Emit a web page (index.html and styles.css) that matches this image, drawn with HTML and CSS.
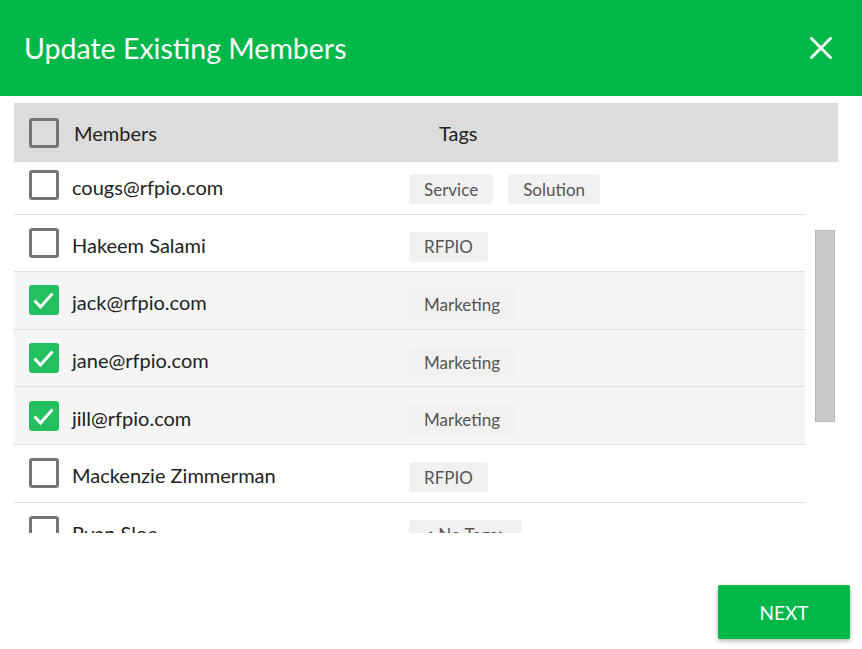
FILE: index.html
```html
<!DOCTYPE html>
<html>
<head>
    <title>Update Existing Members</title>
    <link rel="stylesheet" href="styles.css">
</head>
<body>
    <div class="dialog">
        <div class="dialog-header">
            <h1 class="dialog-title">Update Existing Members</h1>
            <button class="close-btn" aria-label="Close">
                <svg width="22" height="22" viewBox="0 0 22 22">
                    <path d="M1.5 1.5 L20.5 20.5 M20.5 1.5 L1.5 20.5" stroke="#fff" stroke-width="2.8" stroke-linecap="square"/>
                </svg>
            </button>
        </div>

        <div class="members-table">
            <div class="table-head">
                <span class="checkbox"></span>
                <span class="head-members">Members</span>
                <span class="head-tags">Tags</span>
            </div>

            <div class="table-body">
                <div class="rows">
                    <div class="row">
                        <span class="checkbox"></span>
                        <span class="member-name">cougs@rfpio.com</span>
                        <div class="tags">
                            <span class="tag">Service</span>
                            <span class="tag">Solution</span>
                        </div>
                    </div>
                    <div class="row">
                        <span class="checkbox"></span>
                        <span class="member-name">Hakeem Salami</span>
                        <div class="tags"><span class="tag">RFPIO</span></div>
                    </div>
                    <div class="row selected">
                        <span class="checkbox checked">
                            <svg width="30" height="30" viewBox="0 0 30 30"><polyline points="5.5,15.5 11.5,22 23.5,8.5" fill="none" stroke="#fff" stroke-width="3"/></svg>
                        </span>
                        <span class="member-name">jack@rfpio.com</span>
                        <div class="tags"><span class="tag">Marketing</span></div>
                    </div>
                    <div class="row selected">
                        <span class="checkbox checked">
                            <svg width="30" height="30" viewBox="0 0 30 30"><polyline points="5.5,15.5 11.5,22 23.5,8.5" fill="none" stroke="#fff" stroke-width="3"/></svg>
                        </span>
                        <span class="member-name">jane@rfpio.com</span>
                        <div class="tags"><span class="tag">Marketing</span></div>
                    </div>
                    <div class="row selected">
                        <span class="checkbox checked">
                            <svg width="30" height="30" viewBox="0 0 30 30"><polyline points="5.5,15.5 11.5,22 23.5,8.5" fill="none" stroke="#fff" stroke-width="3"/></svg>
                        </span>
                        <span class="member-name">jill@rfpio.com</span>
                        <div class="tags"><span class="tag">Marketing</span></div>
                    </div>
                    <div class="row">
                        <span class="checkbox"></span>
                        <span class="member-name">Mackenzie Zimmerman</span>
                        <div class="tags"><span class="tag">RFPIO</span></div>
                    </div>
                    <div class="row">
                        <span class="checkbox"></span>
                        <span class="member-name">Ryan Sloe</span>
                        <div class="tags"><span class="tag">&lt; No Tags&gt;</span></div>
                    </div>
                </div>
                <div class="scroll-track">
                    <div class="scroll-thumb"></div>
                </div>
            </div>
        </div>

        <div class="dialog-footer">
            <button class="next-btn">Next</button>
        </div>
    </div>
</body>
</html>
```

FILE: styles.css
```css
body {
    margin: 0;
    padding: 0;
    width: 862px;
    height: 649px;
    overflow: hidden;
    background: #fff;
    font-family: Lato, "Open Sans", Arial, sans-serif;
    color: #333;
}

.dialog {
    display: flex;
    flex-direction: column;
    height: 649px;
}

.dialog-header {
    height: 96px;
    flex-shrink: 0;
    display: flex;
    align-items: center;
    justify-content: space-between;
    padding: 0 30px 0 24px;
    background: #00b84a;
}

.dialog-title {
    margin: 0;
    color: #fff;
    font-size: 28.5px;
    font-weight: 400;
}

.close-btn {
    border: none;
    background: none;
    padding: 0;
    width: 22px;
    height: 22px;
    cursor: pointer;
    display: flex;
}

.members-table {
    margin: 7px 24px 0 14px;
}

.table-head {
    height: 59px;
    display: flex;
    align-items: center;
    padding-left: 15px;
    background: #dcdcdc;
    font-size: 20px;
    color: #222;
}

.head-members {
    margin-left: 15px;
    width: 365px;
}

.checkbox {
    width: 30px;
    height: 30px;
    box-sizing: border-box;
    border: 3px solid #757575;
    border-radius: 3px;
    flex-shrink: 0;
    display: flex;
}

.checkbox.checked {
    border: none;
    background: #22c05e;
}

.table-body {
    display: flex;
    height: 371px;
    overflow: hidden;
}

.rows {
    width: 791px;
    margin-top: -5px;
}

.row {
    height: 56.6px;
    display: flex;
    align-items: center;
    padding-left: 15px;
    border-bottom: 1px solid #dedede;
}

.row.selected {
    background: #f5f5f5;
}

.member-name {
    margin-left: 13px;
    padding-top: 4px;
    width: 337px;
    font-size: 20px;
    color: #222;
}

.tags {
    display: flex;
    gap: 15px;
    margin-top: 8px;
}

.tag {
    height: 30px;
    display: flex;
    align-items: center;
    padding: 0 15px;
    border-radius: 4px;
    background: #f1f1f1;
    color: #555;
    font-size: 17px;
}

.scroll-track {
    flex: 1;
    padding: 68px 0 0 10px;
}

.scroll-thumb {
    width: 20px;
    height: 192px;
    box-sizing: border-box;
    background: #cacaca;
    border: 1px solid #b8b8b8;
}

.dialog-footer {
    display: flex;
    justify-content: flex-end;
    padding: 52px 12px 0 0;
}

.next-btn {
    width: 132px;
    height: 54px;
    border: none;
    border-radius: 2px;
    background: #00b84a;
    color: #fff;
    font-family: inherit;
    font-size: 19px;
    text-transform: uppercase;
    box-shadow: 0 2px 5px rgba(0, 0, 0, 0.3);
    cursor: pointer;
}
```
